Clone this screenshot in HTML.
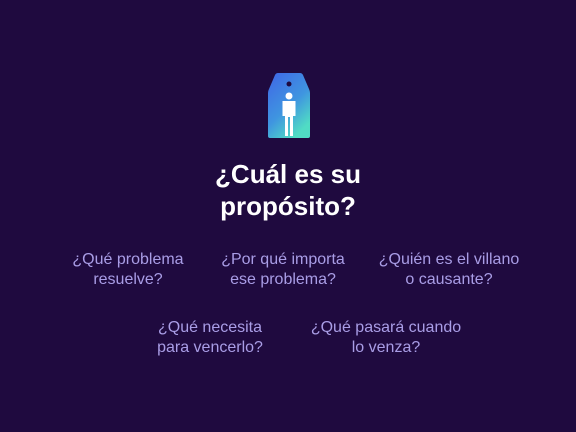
<html><head><style>
body{margin:0;width:576px;height:432px;background:#1f0a3f;overflow:hidden;font-family:"Liberation Sans",sans-serif;position:relative}
.t{position:absolute;left:0;width:576px;text-align:center;color:#fff;font-weight:bold;font-size:26px;line-height:32px;top:158px}
.q{position:absolute;color:#a99de6;font-size:16px;line-height:20px;text-align:center;width:190px}
</style></head><body>
<svg style="position:absolute;left:266px;top:71px" width="46" height="70" viewBox="0 0 46 70">
<defs><linearGradient id="g" x1="0" y1="0" x2="0.6" y2="1"><stop offset="0" stop-color="#3f66e6"/><stop offset="0.6" stop-color="#3f95e0"/><stop offset="1" stop-color="#50dcc4"/></linearGradient></defs>
<path d="M12 2 H34 Q36 2 37 4 L43 18 Q44 20 44 22 V65 Q44 67 42 67 H4 Q2 67 2 65 V22 Q2 20 3 18 L9 4 Q10 2 12 2Z" fill="url(#g)"/>
<circle cx="23" cy="13" r="2.5" fill="#1f0a3f"/>
<circle cx="23" cy="25" r="3.5" fill="#fff"/>
<path d="M16.5 30 H29.5 V45 H27 V65 H24 V46 H22 V65 H19 V45 H16.5Z" fill="#fff"/>
</svg>
<div class="t">¿Cuál es su<br>propósito?</div>
<div class="q" style="left:33px;top:250px">¿Qué problema<br>resuelve?</div>
<div class="q" style="left:188px;top:250px">¿Por qué importa<br>ese problema?</div>
<div class="q" style="left:354px;top:250px">¿Quién es el villano<br>o causante?</div>
<div class="q" style="left:115px;top:318px">¿Qué necesita<br>para vencerlo?</div>
<div class="q" style="left:291px;top:318px">¿Qué pasará cuando<br>lo venza?</div>
</body></html>
